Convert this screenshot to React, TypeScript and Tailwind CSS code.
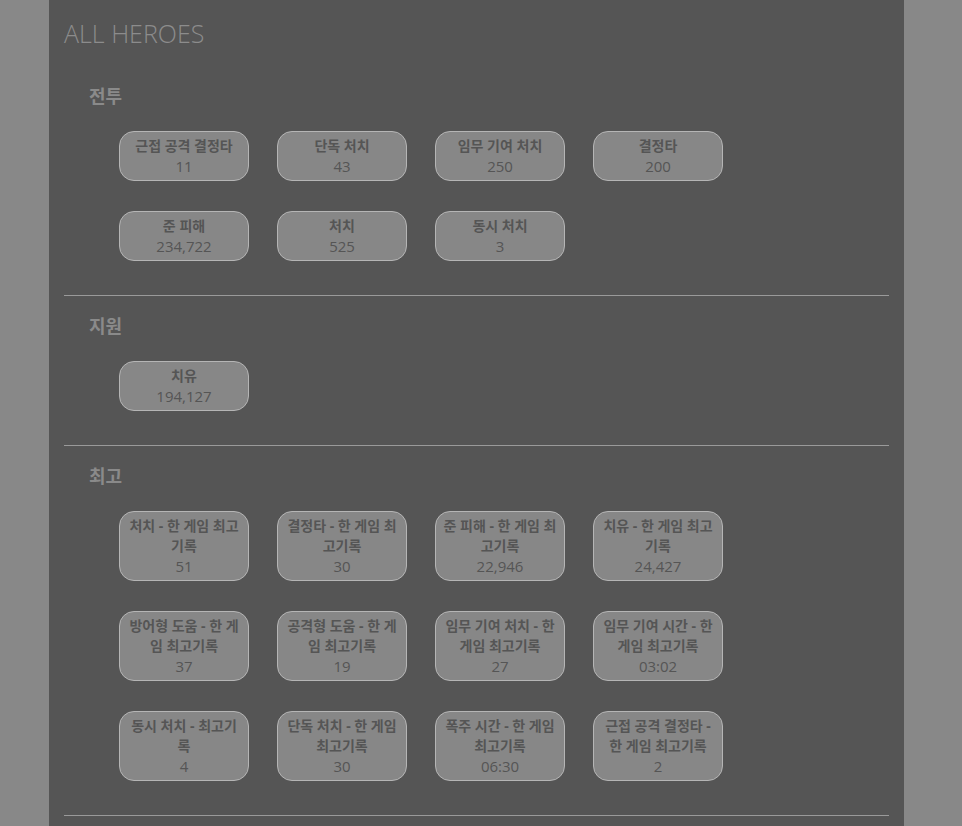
type Stat = { label: string; value: string };

const sections: { title: string; stats: Stat[] }[] = [
  {
    title: '전투',
    stats: [
      { label: '근접 공격 결정타', value: '11' },
      { label: '단독 처치', value: '43' },
      { label: '임무 기여 처치', value: '250' },
      { label: '결정타', value: '200' },
      { label: '준 피해', value: '234,722' },
      { label: '처치', value: '525' },
      { label: '동시 처치', value: '3' },
    ],
  },
  {
    title: '지원',
    stats: [{ label: '치유', value: '194,127' }],
  },
  {
    title: '최고',
    stats: [
      { label: '처치 - 한 게임 최고기록', value: '51' },
      { label: '결정타 - 한 게임 최고기록', value: '30' },
      { label: '준 피해 - 한 게임 최고기록', value: '22,946' },
      { label: '치유 - 한 게임 최고기록', value: '24,427' },
      { label: '방어형 도움 - 한 게임 최고기록', value: '37' },
      { label: '공격형 도움 - 한 게임 최고기록', value: '19' },
      { label: '임무 기여 처치 - 한 게임 최고기록', value: '27' },
      { label: '임무 기여 시간 - 한 게임 최고기록', value: '03:02' },
      { label: '동시 처치 - 최고기록', value: '4' },
      { label: '단독 처치 - 한 게임 최고기록', value: '30' },
      { label: '폭주 시간 - 한 게임 최고기록', value: '06:30' },
      { label: '근접 공격 결정타 - 한 게임 최고기록', value: '2' },
    ],
  },
];

const StatCard = ({ stat }: { stat: Stat }) => (
  <div className="w-[130px] rounded-[15px] border border-[#b5b5b5] bg-[#878787] px-[5px] py-1 text-center leading-5 text-[#555]">
    <div className="text-sm font-bold">{stat.label}</div>
    <div className="text-[15px]">{stat.value}</div>
  </div>
);

export default function App() {
  return (
    <div className="min-h-screen w-full bg-[#888] font-['Open_Sans','Noto_Sans_CJK_KR',sans-serif]">
      <div className="ml-[49px] min-h-screen w-[855px] bg-[#555] px-[15px] pt-[15px]">
        <h1 className="mb-[15px] text-[25px] font-light leading-9 text-[#8c8c8c]">ALL HEROES</h1>

        {sections.map((section) => (
          <section key={section.title} className="border-b border-[#9a9a9a] pt-[18px] pb-[34px]">
            <h2 className="pl-[25px] text-lg font-bold leading-6 text-[#8a8a8a]">{section.title}</h2>
            <div className="mt-[23px] grid grid-cols-[repeat(4,130px)] gap-x-[28px] gap-y-[30px] pl-[55px]">
              {section.stats.map((s) => (
                <StatCard key={s.label} stat={s} />
              ))}
            </div>
          </section>
        ))}
      </div>
    </div>
  );
}
